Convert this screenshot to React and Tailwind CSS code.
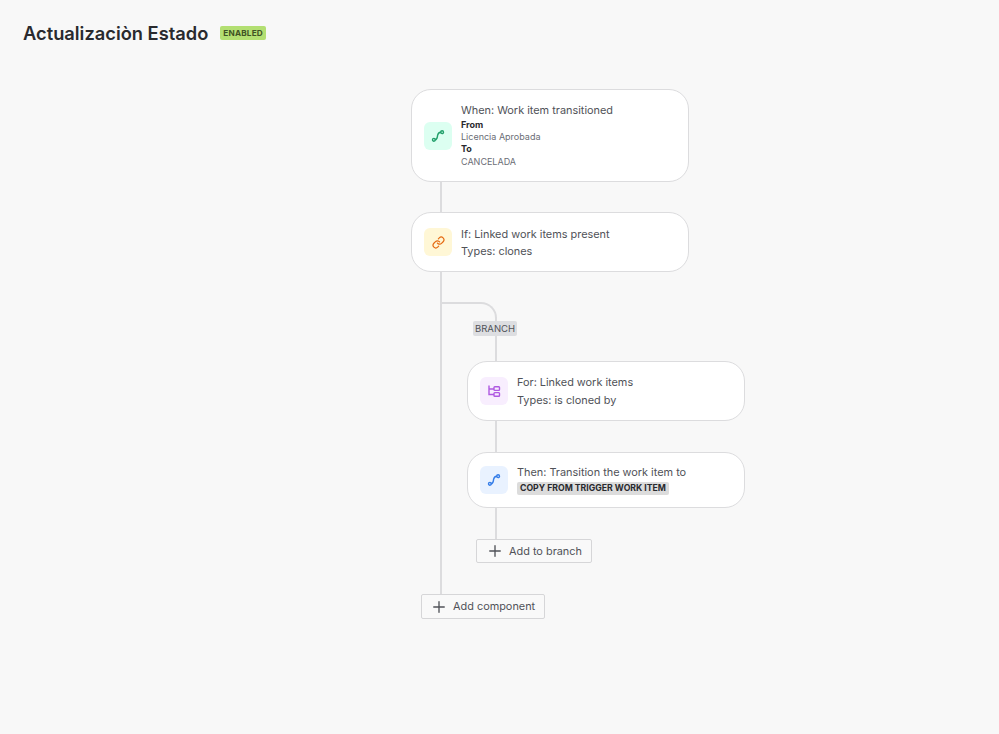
import React from "react"
import { Link, Plus } from "lucide-react"

function RouteIcon({ className }) {
	return (
		<svg width="14" height="14" viewBox="0 0 14 14" fill="none" stroke="currentColor" strokeWidth="1.4" strokeLinecap="round" className={className}>
			<circle cx="2.9" cy="10.8" r="1.4" />
			<circle cx="11.1" cy="3.2" r="1.4" />
			<path d="M4.3 10.7C6.2 10.4 6.2 8.6 6.6 6.4C7 4.2 7.8 3.4 9.7 3.2" />
		</svg>
	)
}

function TreeIcon({ className }) {
	return (
		<svg width="14" height="14" viewBox="0 0 14 14" fill="none" stroke="currentColor" strokeWidth="1.4" className={className}>
			<path d="M2 1.5V10.5H7M2 5H7" />
			<rect x="7" y="2.8" width="5.5" height="3.6" rx="0.8" />
			<rect x="7" y="8.6" width="5.5" height="3.6" rx="0.8" />
		</svg>
	)
}

function Card({ tint, icon, className = "", children }) {
	return (
		<div className={`w-[278px] flex items-center gap-[9px] pl-[12px] bg-white border border-[#dcdcde] rounded-[20px] ${className}`}>
			<div className={`w-[28px] h-[28px] shrink-0 rounded-[6px] flex items-center justify-center ${tint}`}>{icon}</div>
			<div className="min-w-0 text-[#505258]">{children}</div>
		</div>
	)
}

function AddButton({ label, className = "" }) {
	return (
		<button className={`flex items-center gap-[5px] bg-[#f9f9f9] border border-[#d6d6d8] rounded-[2px] text-[10.9px] text-[#505258] font-normal ${className}`}>
			<Plus size={18} strokeWidth={1.8} className="text-[#505258]" />
			{label}
		</button>
	)
}

export default function App() {
	return (
		<div className="w-[999px] h-[734px] overflow-hidden bg-[#f8f8f8] font-['Inter',sans-serif]">
			<header className="flex items-start gap-[12px] pl-[23px] pt-[22px] h-[89px]">
				<h1 className="text-[18.3px] leading-[22px] font-semibold text-[#292a2e]">Actualizaciòn Estado</h1>
				<span className="mt-[4px] h-[14px] px-[3px] rounded-[2px] bg-[#b3df72] text-[8.2px] leading-[14px] font-bold text-[#3f5224] tracking-[0.2px]">ENABLED</span>
			</header>

			<div className="ml-[411px] w-[340px]">
				<Card tint="bg-[#dcfff1]" icon={<RouteIcon className="text-[#22a06b]" />} className="h-[93px]">
					<p className="text-[10.9px] leading-[14px] mb-[2px]">When: Work item transitioned</p>
					<p className="text-[9px] leading-[12px] font-bold text-[#292a2e]">From</p>
					<p className="text-[9px] leading-[12px] text-[#6b6e76]">Licencia Aprobada</p>
					<p className="text-[9px] leading-[12px] font-bold text-[#292a2e]">To</p>
					<p className="text-[9px] leading-[14px] text-[#6b6e76]">CANCELADA</p>
				</Card>
				<div className="ml-[29px] w-[2px] h-[30px] bg-[#dcdcde]" />
				<Card tint="bg-[#fff7d6]" icon={<Link size={13} strokeWidth={2.2} className="text-[#e56910]" />} className="h-[60px]">
					<div className="pt-[1px]">
						<p className="text-[10.9px] leading-[14px] mb-[3px]">If: Linked work items present</p>
						<p className="text-[10.9px] leading-[14px]">Types: clones</p>
					</div>
				</Card>

				<div className="ml-[29px] h-[322px] border-l-2 border-[#dcdcde] pt-[30px]">
					<div className="relative w-[55px] h-[59px] border-t-2 border-r-2 border-[#dcdcde] rounded-tr-[16px]">
						<span className="absolute left-[31px] top-[17px] h-[15px] px-[2px] rounded-[2px] bg-[#dddee1] text-[9.5px] leading-[15px] text-[#505258]">BRANCH</span>
					</div>
					<Card tint="bg-[#f8eefe]" icon={<TreeIcon className="text-[#af59e1]" />} className="ml-[25px] h-[60px]">
						<p className="text-[10.9px] leading-[14px] mb-[4px]">For: Linked work items</p>
						<p className="text-[10.9px] leading-[14px]">Types: is cloned by</p>
					</Card>
					<div className="ml-[53px] w-[2px] h-[31px] bg-[#dcdcde]" />
					<Card tint="bg-[#e9f2ff]" icon={<RouteIcon className="text-[#357de8]" />} className="ml-[25px] h-[56px]">
						<div className="pb-[1px]">
							<p className="text-[10.9px] leading-[14px] mb-[3px]">Then: Transition the work item to</p>
							<span className="block w-fit h-[13px] px-[3px] rounded-[2px] bg-[#dcdcdc] text-[8.7px] leading-[13px] font-bold text-[#292a2e]">COPY FROM TRIGGER WORK ITEM</span>
						</div>
					</Card>
					<div className="ml-[53px] w-[2px] h-[31px] bg-[#dcdcde]" />
					<AddButton label="Add to branch" className="ml-[34px] w-[116px] h-[24px] pl-[9px]" />
				</div>
				<AddButton label="Add component" className="ml-[10px] w-[124px] h-[25px] pl-[8px]" />
			</div>
		</div>
	)
}
